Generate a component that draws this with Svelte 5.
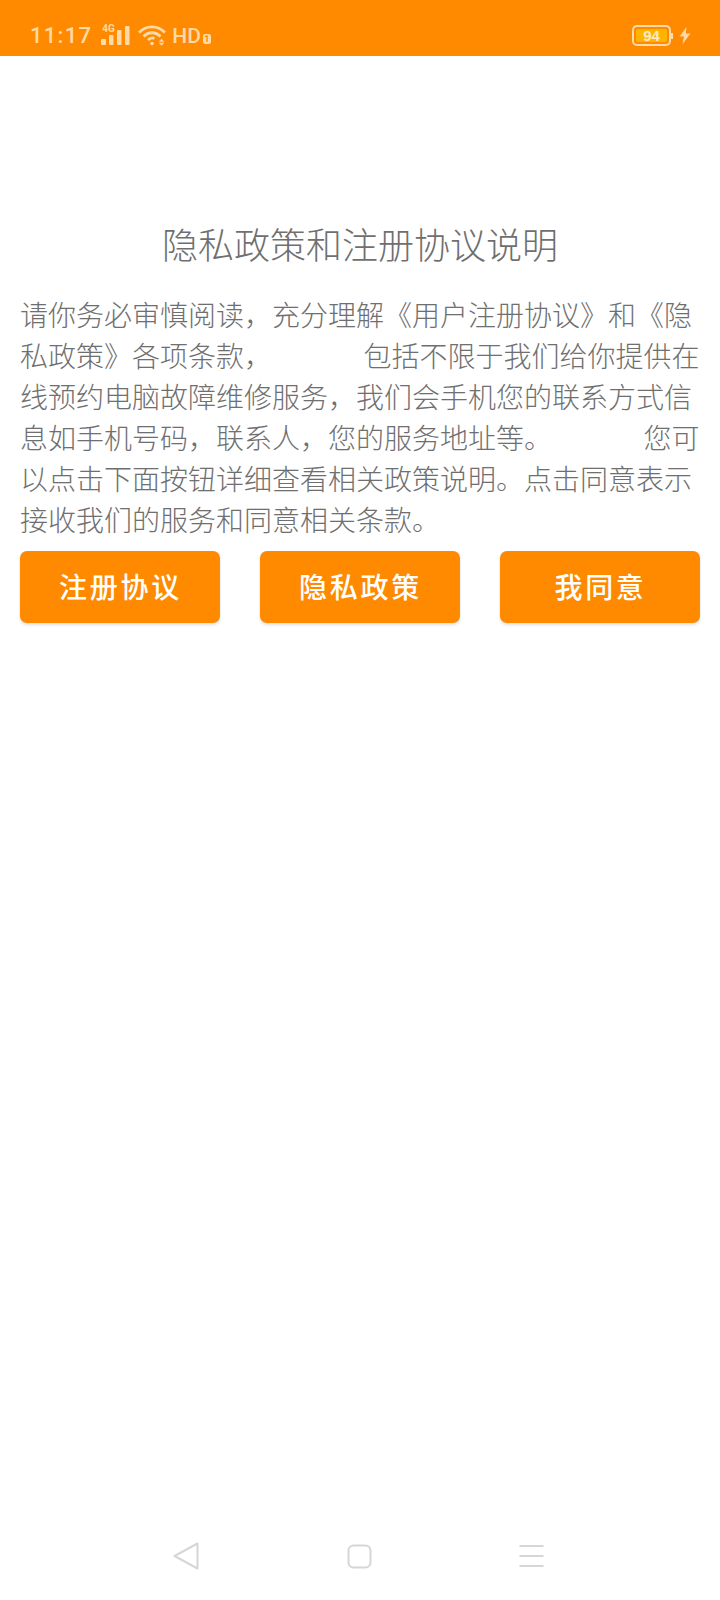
<script lang="ts">
  const title = '隐私政策和注册协议说明';
  const gap = ' '.repeat(14);
  const body = `请你务必审慎阅读，充分理解《用户注册协议》和《隐私政策》各项条款，${gap}包括不限于我们给你提供在线预约电脑故障维修服务，我们会手机您的联系方式信息如手机号码，联系人，您的服务地址等。${gap}您可以点击下面按钮详细查看相关政策说明。点击同意表示接收我们的服务和同意相关条款。`;
  const buttons = ['注册协议', '隐私政策', '我同意'];
</script>

<div class="page">
  <header class="status">
    <div class="status-left">
      <span class="clock">11:17</span>
      <div class="signal">
        <span class="net">4G</span>
        <svg width="30" height="20" viewBox="0 0 30 20" fill="#ffd9a6">
          <rect x="0" y="13" width="5" height="6" rx="1" />
          <rect x="8" y="9" width="4.5" height="10" rx="1" />
          <rect x="16" y="4" width="4.5" height="15" rx="1" />
          <rect x="24" y="0" width="4.5" height="19" rx="1" />
        </svg>
      </div>
      <svg class="wifi" width="29" height="21" viewBox="0 0 29 21" fill="none" stroke="#ffd9a6" stroke-width="2.8">
        <path d="M1 7.500C8.500 0 19.500 0 27 7.500" />
        <path d="M5.500 11.500C10.500 6.500 17.500 6.500 22.500 11.500" />
        <path d="M10 15C12 13 14.500 12.500 16.500 13.500" />
        <circle cx="14" cy="18.500" r="1.800" fill="#ffd9a6" stroke="none" />
        <path d="M23.500 13.800l2.800 3h-5.600zM23.500 20.800l2.800-3h-5.600z" fill="#ffd9a6" stroke="none" />
      </svg>
      <span class="hd">HD</span>
      <span class="sim">1</span>
    </div>
    <div class="status-right">
      <div class="battery"><span class="level">94</span></div>
      <i class="nub"></i>
      <svg class="bolt" width="12" height="17" viewBox="0 0 12 17" fill="#ffd9a6">
        <path d="M7.500 0L0.500 9.500H5L3.500 17L11.500 6.500H6.800Z" />
      </svg>
    </div>
  </header>

  <main class="content">
    <h1>{title}</h1>
    <p>{body}</p>
    <div class="actions">
      {#each buttons as label}
        <button>{label}</button>
      {/each}
    </div>
  </main>

  <nav class="navbar">
    <svg width="26" height="28" viewBox="0 0 26 28" fill="none" stroke="#d6d6d6" stroke-width="2" stroke-linejoin="round">
      <path d="M24.500 1.500V26.500L1.500 14Z" />
    </svg>
    <svg width="25" height="25" viewBox="0 0 25 25" fill="none" stroke="#d6d6d6" stroke-width="2">
      <rect x="1.500" y="1.500" width="22" height="22" rx="5" />
    </svg>
    <svg width="25" height="24" viewBox="0 0 25 24" fill="none" stroke="#d6d6d6" stroke-width="2">
      <path d="M0.500 2H24.500M0.500 12H24.500M0.500 22H24.500" />
    </svg>
  </nav>
</div>

<style>
  :global(body) {
    background: #fff;
  }

  .page {
    display: flex;
    flex-direction: column;
    height: 1600px;
    font-family: "Noto Sans CJK SC", "Liberation Sans", sans-serif;
  }

  .status {
    display: flex;
    justify-content: space-between;
    align-items: center;
    height: 56px;
    padding: 15px 29px 0 30px;
    box-sizing: border-box;
    background: #ff8a00;
    color: #ffd9a6;
  }

  .status-left,
  .status-right {
    display: flex;
    align-items: center;
  }

  .clock {
    font-family: Roboto, sans-serif;
    font-size: 22px;
    font-weight: 500;
    letter-spacing: 1.300px;
    line-height: 26px;
  }

  .signal {
    position: relative;
    margin-left: 9px;
    margin-top: 1px;
    width: 30px;
    height: 20px;
  }

  .net {
    position: absolute;
    left: 1px;
    top: -2px;
    font-family: Roboto, sans-serif;
    font-size: 10px;
    font-weight: 700;
    line-height: 10px;
  }

  .wifi {
    margin-left: 7px;
  }

  .hd {
    margin-left: 5px;
    font-family: Roboto, sans-serif;
    font-size: 21px;
    font-weight: 500;
    line-height: 24px;
  }

  .sim {
    margin: 6px 0 0 2px;
    width: 8px;
    height: 10px;
    border-radius: 2px;
    background: #ffd9a6;
    color: #ff8a00;
    font-family: Roboto, sans-serif;
    font-size: 9px;
    font-weight: 700;
    line-height: 10px;
    text-align: center;
  }

  .battery {
    display: flex;
    width: 39px;
    height: 21px;
    padding: 2px;
    box-sizing: border-box;
    border: 2px solid #ffd9a6;
    border-radius: 5px;
  }

  .level {
    flex: 1;
    border-radius: 2px;
    background: #ffb400;
    color: #ffe9c9;
    font-family: "Liberation Sans", sans-serif;
    font-size: 15px;
    font-weight: 700;
    line-height: 13px;
    text-align: center;
  }

  .nub {
    width: 2px;
    height: 6px;
    background: #ffd9a6;
  }

  .bolt {
    margin-left: 6px;
  }

  .content {
    flex: 1;
    padding: 163px 20px 0 20px;
  }

  h1 {
    margin: 0 0 27px;
    color: #6f6f6f;
    font-size: 36px;
    font-weight: 300;
    line-height: 48px;
    text-align: center;
  }

  p {
    margin: 0;
    color: #6f6f6f;
    font-size: 28px;
    font-weight: 300;
    line-height: 41px;
    white-space: pre-wrap;
    word-spacing: 0.35px;
  }

  .actions {
    display: flex;
    justify-content: space-between;
    margin-top: 11px;
  }

  button {
    width: 200px;
    height: 72px;
    padding: 0 0 3px 1px;
    border: none;
    border-radius: 7px;
    background: #ff8a00;
    box-shadow: 0 2px 3px rgba(0, 0, 0, 0.12);
    color: #fff;
    font-family: inherit;
    font-size: 28px;
    font-weight: 500;
    letter-spacing: 2.700px;
  }

  .navbar {
    display: flex;
    justify-content: space-between;
    align-items: center;
    height: 28px;
    padding: 0 176px 30px 173px;
  }
</style>
